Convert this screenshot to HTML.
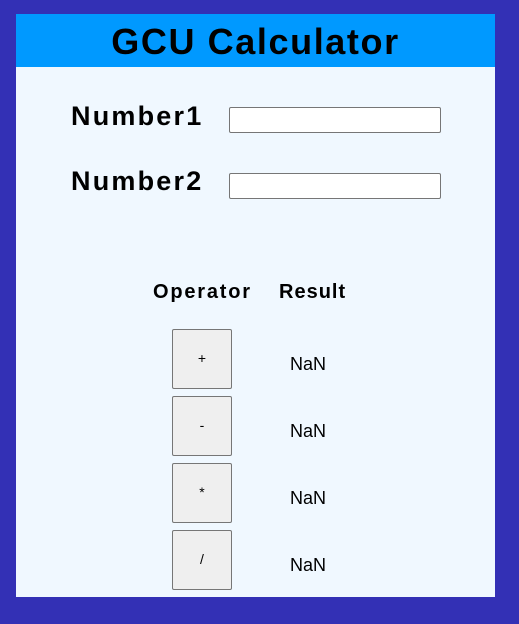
<!DOCTYPE html>
<html><head><style>
html,body{margin:0;padding:0;}
body{width:519px;height:624px;background:#3330b5;position:relative;overflow:hidden;font-family:"Liberation Sans",sans-serif;color:#000;}
#c{position:absolute;left:16px;top:14px;width:479px;height:583px;background:#f0f8ff;}
#h{position:absolute;left:0;top:0;width:479px;height:53px;background:#0099ff;text-align:center;font-weight:bold;font-size:36px;line-height:56px;letter-spacing:1.6px;}
.l{position:absolute;font-weight:bold;font-size:27px;line-height:30px;letter-spacing:2.2px;}
.in{position:absolute;width:210px;height:24px;background:#fff;border:1px solid #767676;border-radius:2px;}
.t{position:absolute;font-weight:bold;font-size:20px;line-height:24px;}
.b{position:absolute;left:156px;width:58px;height:58px;background:#efefef;border:1px solid #767676;border-radius:2px;text-align:center;line-height:56px;font-size:14px;}
.n{position:absolute;left:274px;font-size:18px;line-height:22px;}
</style></head><body>
<div id="c">
<div id="h">GCU Calculator</div>
<div class="l" style="left:55px;top:87px">Number1</div>
<div class="in" style="left:213px;top:93px"></div>
<div class="l" style="left:55px;top:152px">Number2</div>
<div class="in" style="left:213px;top:159px"></div>
<div class="t" style="left:137px;top:266px;letter-spacing:1.8px">Operator</div>
<div class="t" style="left:263px;top:266px;letter-spacing:1px">Result</div>
<div class="b" style="top:315px">+</div><div class="n" style="top:339px">NaN</div>
<div class="b" style="top:382px">-</div><div class="n" style="top:406px">NaN</div>
<div class="b" style="top:449px">*</div><div class="n" style="top:473px">NaN</div>
<div class="b" style="top:516px">/</div><div class="n" style="top:540px">NaN</div>
</div>
</body></html>
